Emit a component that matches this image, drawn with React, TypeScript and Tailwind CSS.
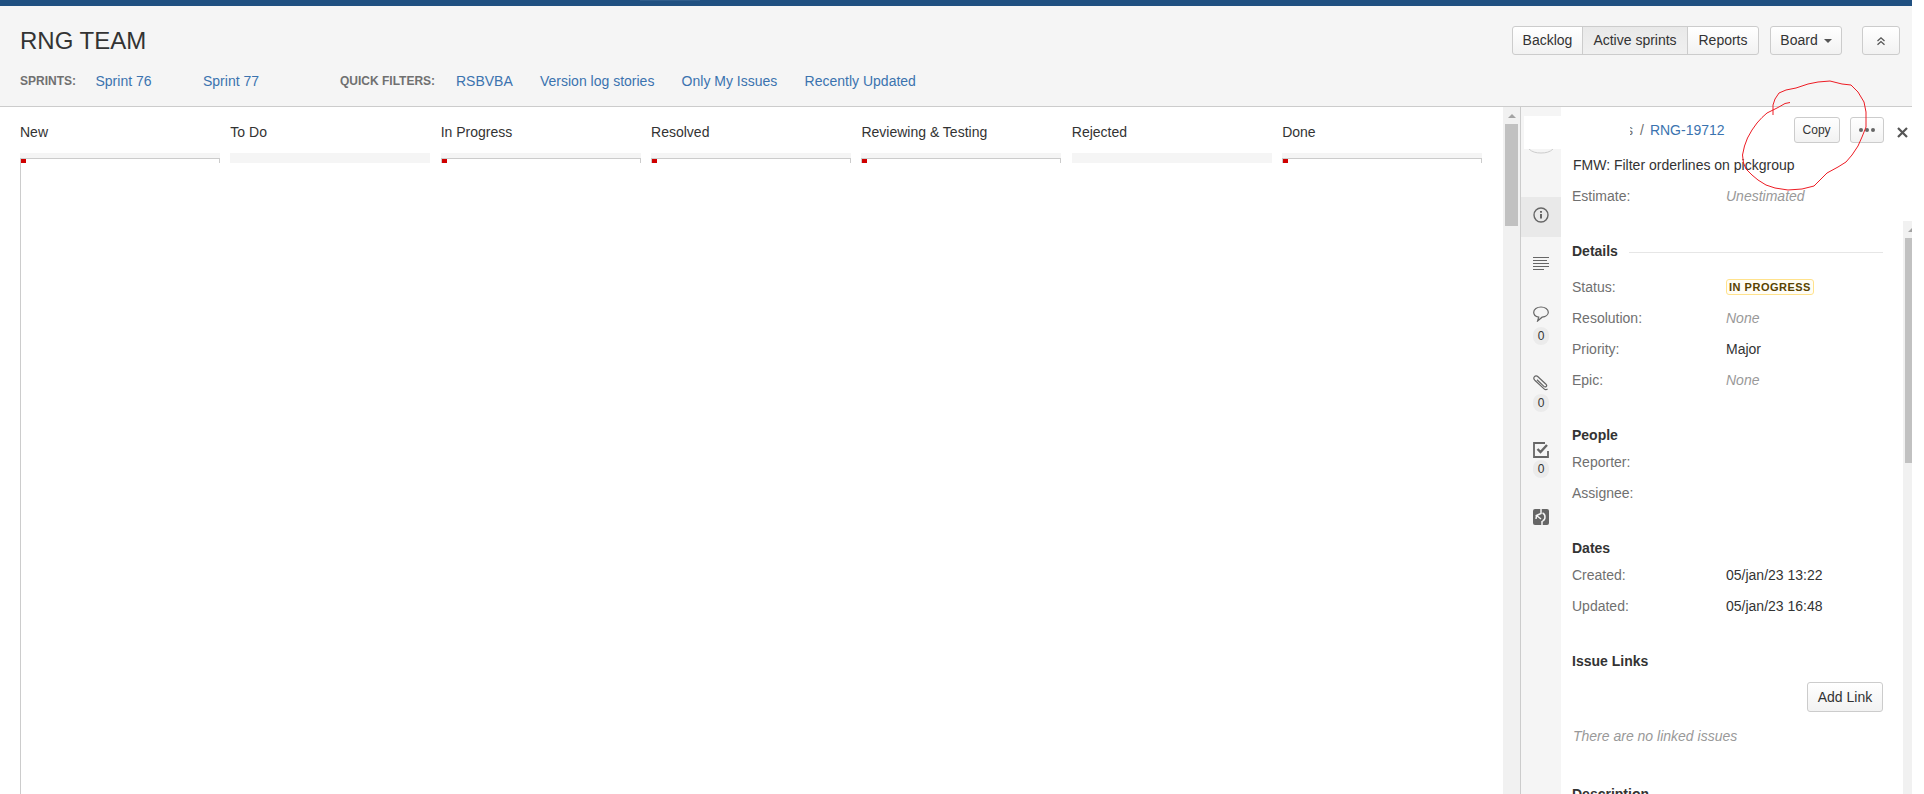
import React from "react";

const columns = [
  { name: "New", red: true },
  { name: "To Do", red: false },
  { name: "In Progress", red: true },
  { name: "Resolved", red: true },
  { name: "Reviewing & Testing", red: true },
  { name: "Rejected", red: false },
  { name: "Done", red: true },
];

function Row({ label, children }: { label: string; children?: React.ReactNode }) {
  return (
    <div className="flex h-[31px] items-center">
      <div className="w-[154px] shrink-0 text-[#707070]">{label}</div>
      <div className="text-[#333]">{children}</div>
    </div>
  );
}

function Muted({ children }: { children: React.ReactNode }) {
  return <span className="italic text-[#999]">{children}</span>;
}

function Heading({ children, className = "" }: { children: React.ReactNode; className?: string }) {
  return <div className={"h-5 leading-5 font-bold text-[#333] " + className}>{children}</div>;
}

function Badge({ className = "" }: { className?: string }) {
  return (
    <div className={"w-4 h-[18px] rounded-full bg-[#ebebeb] text-[12px] leading-[18px] text-center text-[#333] " + className}>0</div>
  );
}

const btn = "flex items-center justify-center bg-linear-to-b from-white to-[#f2f2f2] border border-[#ccc] text-[#333]";

export default function App() {
  return (
    <div className="relative w-full h-[794px] overflow-hidden bg-white font-['Liberation_Sans',Arial,sans-serif] text-[14px] text-[#333]">
      <div className="w-[1912px] h-full flex flex-col">
        {/* Top strip */}
        <div className="h-[6px] shrink-0 bg-[#205081]">
          <div className="ml-[640px] w-[60px] h-px bg-[#2f5d8c]" />
        </div>

        {/* Page header */}
        <div className="h-[101px] shrink-0 flex justify-between bg-[#f5f5f5] border-b border-[#ccc]">
          <div className="pl-5 pt-[19px]">
            <div className="h-8 leading-8 text-[24px] text-[#333]">RNG TEAM</div>
            <div className="flex items-center h-5 mt-[14px] text-[#3b73af]">
              <span className="w-[75.5px] text-[12px] font-bold text-[#707070]">SPRINTS:</span>
              <span className="w-[107.5px]">Sprint 76</span>
              <span className="w-[137px]">Sprint 77</span>
              <span className="w-[116px] text-[12px] font-bold text-[#707070]">QUICK FILTERS:</span>
              <span className="w-[84px]">RSBVBA</span>
              <span className="w-[141.6px]">Version log stories</span>
              <span className="w-[123px]">Only My Issues</span>
              <span>Recently Updated</span>
            </div>
          </div>
          <div className="flex pt-5 pr-3 h-[49px]">
            <div className={btn + " w-[71px] h-[29px] rounded-l-[3px]"}>Backlog</div>
            <div className="flex items-center justify-center w-[106px] h-[29px] -ml-px bg-linear-to-b from-[#e9e9e9] to-[#f0f0f0] border border-[#ccc] text-[#333]">Active sprints</div>
            <div className={btn + " w-[72px] h-[29px] -ml-px rounded-r-[3px]"}>Reports</div>
            <div className={btn + " w-[72px] h-[29px] ml-[11px] rounded-[3px] gap-[6px]"}>
              <span>Board</span>
              <span className="w-0 h-0 border-x-4 border-x-transparent border-t-4 border-t-[#555]" />
            </div>
            <div className={btn + " w-[38px] h-[29px] ml-5 rounded-[3px]"}>
              <svg width="10" height="10" viewBox="0 0 10 10" fill="none" stroke="#555" strokeWidth="1.3">
                <path d="M1.5 5 5 1.8 8.5 5M1.5 8.8 5 5.6l3.5 3.2" />
              </svg>
            </div>
          </div>
        </div>

        {/* Body */}
        <div className="flex-1 min-h-0 flex">
          {/* Board */}
          <div className="w-[1503px] shrink-0 pl-5 pr-[21px] pt-[15px] grid grid-cols-7 gap-x-[10.5px]">
            {columns.map((c, i) => (
              <div key={c.name} className="flex flex-col min-w-0">
                <div className="h-5 leading-5 text-[#333] whitespace-nowrap">{c.name}</div>
                <div className="h-[10px] mt-[11px] pt-[5px] bg-[#f5f5f5]">
                  {c.red && (
                    <div className="h-[5px] border-t border-x border-[#ccc] bg-white">
                      <div className="w-[5px] h-1 bg-[#d00000]" />
                    </div>
                  )}
                </div>
                {i === 0 && <div className="flex-1 border-l border-[#ccc]" />}
              </div>
            ))}
          </div>

          {/* Board scrollbar */}
          <div className="w-[17px] shrink-0 bg-[#f1f1f1] flex flex-col items-center pt-[7px]">
            <span className="w-0 h-0 border-x-4 border-x-transparent border-b-4 border-b-[#a3a3a3]" />
            <div className="w-[13px] h-[102px] mt-[6px] bg-[#c1c1c1]" />
          </div>

          {/* Icon rail */}
          <div className="w-[41px] shrink-0 bg-[#f5f5f5] border-l border-[#ccc] flex flex-col items-center">
            <div className="self-end w-[37px] h-[33px] mt-[9px] bg-white" />
            <svg width="26" height="5" viewBox="0 0 26 5" fill="none" stroke="#ccc" className="shrink-0">
              <path d="M1 0c3 3 7 4 12 4s9-1 12-4" />
            </svg>
            <div className="w-full h-10 mt-[43px] bg-[#e9e9e9] flex justify-center pt-[10px]">
              <svg width="16" height="16" viewBox="0 0 16 16" fill="none" stroke="#666" strokeWidth="1.4">
                <circle cx="8" cy="8" r="7" />
                <path d="M8 7v4.5" strokeWidth="2" />
                <path d="M8 4v1.8" strokeWidth="2" />
              </svg>
            </div>
            <svg className="mt-[19px] shrink-0" width="16" height="16" viewBox="0 0 16 16" fill="none" stroke="#666">
              <path d="M0 1.500h16M0 4.500h14M0 7.500h16M0 10.500h16M0 13.500h11" />
            </svg>
            <svg className="mt-[34px] shrink-0" width="16" height="16" viewBox="0 0 16 16" fill="none" stroke="#666" strokeWidth="1.2">
              <path d="M8 1C4 1 .7 3.200.7 6.300c0 2.600 2.200 4.400 5 4.900L4.600 15l4.500-3.800c3.400-.3 6.200-2.300 6.200-4.900C15.300 3.200 12 1 8 1Z" />
            </svg>
            <Badge className="mt-[5px]" />
            <svg className="mt-[30px] shrink-0" width="16" height="16" viewBox="0 0 16 16" fill="none" stroke="#666" strokeWidth="1.2">
              <path d="M14.500 13.800c-1 1.200-2.400 1-3.400.1L1.800 5.200C.6 4 .6 2.600 1.500 1.600s2.300-1 3.500.1l8 7.500c.8.8.8 1.700.2 2.300s-1.500.6-2.300-.1L4 4.700" />
            </svg>
            <Badge className="mt-[3px]" />
            <svg className="mt-[30px] shrink-0" width="16" height="16" viewBox="0 0 16 16" fill="none" stroke="#666">
              <path d="M15 9v6H1V1h11" strokeWidth="1.8" />
              <path d="m4.500 7 3 3 6.500-7" strokeWidth="2.400" />
            </svg>
            <Badge className="mt-[2px]" />
            <svg className="mt-[31px] shrink-0" width="16" height="16" viewBox="0 0 16 16">
              <rect width="16" height="16" rx="2" fill="#666" />
              <path d="M8 0v4.500L3.500 6.500 8 10M3.500 6.500 3 10" fill="none" stroke="#f5f5f5" strokeWidth="1.500" />
              <path d="M9.500 4c1.700.6 2.500 2.200 2.500 4s-.8 3.400-2.500 4M9 12v4" fill="none" stroke="#f5f5f5" strokeWidth="1.500" />
            </svg>
          </div>

          {/* Issue detail */}
          <div className="w-[351px] shrink-0 flex flex-col min-h-0 bg-white">
            <div className="h-[114px] shrink-0 pl-[11px] pt-[10px]">
              <div className="flex items-start h-[26px]">
                <div className="ml-[58px] w-[3px] h-[26px] overflow-hidden flex justify-end items-center leading-none text-[#707070]">s</div>
                <span className="ml-[7px] leading-[26px] text-[#707070]">/</span>
                <span className="ml-[6px] leading-[26px] text-[#3b73af]">RNG-19712</span>
                <div className={btn + " ml-[69px] w-[46px] h-[26px] rounded-[3px] text-[12px]"}>Copy</div>
                <div className={btn + " ml-[10px] w-[34px] h-[26px] rounded-[3px] gap-[2px]"}>
                  <span className="w-1 h-1 rounded-full bg-[#666]" />
                  <span className="w-1 h-1 rounded-full bg-[#666]" />
                  <span className="w-1 h-1 rounded-full bg-[#666]" />
                </div>
                <svg className="ml-[13px] mt-[10px] shrink-0" width="11" height="11" viewBox="0 0 11 11" stroke="#555" strokeWidth="2.200">
                  <path d="M1 1l9 9M10 1l-9 9" />
                </svg>
              </div>
              <div className="ml-px mt-3 h-5 leading-5 text-[#333]">FMW: Filter orderlines on pickgroup</div>
              <div className="mt-[5.500px]">
                <Row label="Estimate:"><Muted>Unestimated</Muted></Row>
              </div>
            </div>

            <div className="flex-1 min-h-0 flex">
              <div className="w-[342px] shrink-0 pl-[11px] pr-5 pt-5 overflow-hidden">
                <div className="flex items-center gap-[11px]">
                  <Heading>Details</Heading>
                  <div className="flex-1 h-px bg-[#e6e6e6] mt-[2px]" />
                </div>
                <div className="mt-[10.500px]">
                  <Row label="Status:">
                    <div className="w-[88px] h-4 flex items-center justify-center border border-[#ffe28c] rounded-[3px] bg-[#fffdf6] text-[11px] font-bold tracking-[0.5px] text-[#594300]">IN PROGRESS</div>
                  </Row>
                  <Row label="Resolution:"><Muted>None</Muted></Row>
                  <Row label="Priority:">Major</Row>
                  <Row label="Epic:"><Muted>None</Muted></Row>
                </div>
                <Heading className="mt-[29.500px]">People</Heading>
                <div className="mt-[1.500px]">
                  <Row label="Reporter:" />
                  <Row label="Assignee:" />
                </div>
                <Heading className="mt-[29px]">Dates</Heading>
                <div className="mt-[2px]">
                  <Row label="Created:">05/jan/23 13:22</Row>
                  <Row label="Updated:">05/jan/23 16:48</Row>
                </div>
                <Heading className="mt-[29.500px]">Issue Links</Heading>
                <div className="flex justify-end mt-[11px]">
                  <div className={btn + " w-[76px] h-[30px] rounded-[3px]"}>Add Link</div>
                </div>
                <div className="mt-[14px] h-5 leading-5 ml-px"><Muted>There are no linked issues</Muted></div>
                <Heading className="mt-[38px]">Description</Heading>
              </div>
              <div className="w-[9px] shrink-0 bg-[#f1f1f1] flex flex-col items-end overflow-hidden">
                <span className="mt-[7px] w-0 h-0 border-l-4 border-l-transparent border-b-4 border-b-[#a3a3a3]" />
                <div className="w-[7px] h-[225px] mt-[6px] bg-[#c1c1c1]" />
              </div>
            </div>
          </div>
        </div>
      </div>

      {/* Hand-drawn red annotation over the page */}
      <svg className="absolute left-[1740px] top-[75px] pointer-events-none" width="160" height="120" viewBox="1740 75 160 120" fill="none" stroke="#ed1c24" strokeWidth="1">
        <path d="M1790 102.500 1785 103.500 1778 107.500 1767 113 1762 117.500 1757 123 1752 130 1747.500 138 1744.500 146 1742.500 155 1743.500 163 1746 169 1752 175 1758 180 1766 185 1775 188 1788 190 1802 189 1814 186 1820 180 1827 173 1838 167 1846 162 1852 155 1858 146 1862 137 1866 127 1866 112 1864 102 1858 92 1851 85 1842 84 1830 81 1818 82 1808 84 1796 88 1786 90 1779 93 1775 99 1773 105 1773 115" />
      </svg>
    </div>
  );
}
